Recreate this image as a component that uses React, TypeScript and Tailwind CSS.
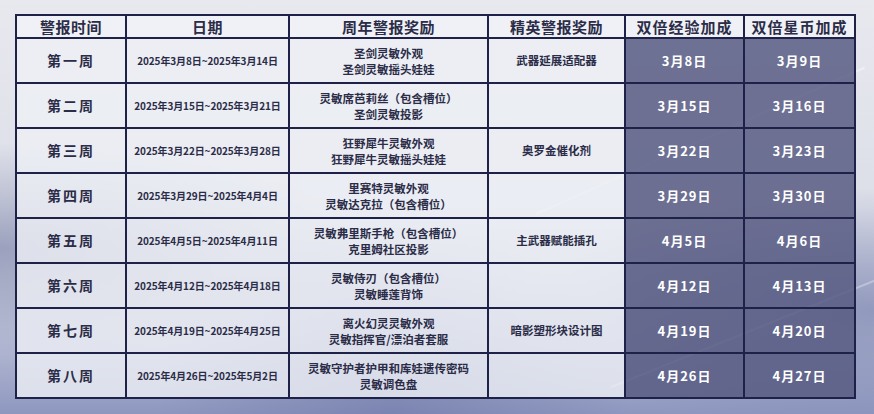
import React from "react";

const rows = [
  { w: "第一周", d: "2025年3月8日~2025年3月14日", a: ["圣剑灵敏外观", "圣剑灵敏摇头娃娃"], e: "武器延展适配器", x: "3月8日", s: "3月9日" },
  { w: "第二周", d: "2025年3月15日~2025年3月21日", a: ["灵敏席芭莉丝（包含槽位）", "圣剑灵敏投影"], e: "", x: "3月15日", s: "3月16日" },
  { w: "第三周", d: "2025年3月22日~2025年3月28日", a: ["狂野犀牛灵敏外观", "狂野犀牛灵敏摇头娃娃"], e: "奥罗金催化剂", x: "3月22日", s: "3月23日" },
  { w: "第四周", d: "2025年3月29日~2025年4月4日", a: ["里赛特灵敏外观", "灵敏达克拉（包含槽位）"], e: "", x: "3月29日", s: "3月30日" },
  { w: "第五周", d: "2025年4月5日~2025年4月11日", a: ["灵敏弗里斯手枪（包含槽位）", "克里姆社区投影"], e: "主武器赋能插孔", x: "4月5日", s: "4月6日" },
  { w: "第六周", d: "2025年4月12日~2025年4月18日", a: ["灵敏侍刃（包含槽位）", "灵敏睡莲背饰"], e: "", x: "4月12日", s: "4月13日" },
  { w: "第七周", d: "2025年4月19日~2025年4月25日", a: ["离火幻灵灵敏外观", "灵敏指挥官/漂泊者套服"], e: "暗影塑形块设计图", x: "4月19日", s: "4月20日" },
  { w: "第八周", d: "2025年4月26日~2025年5月2日", a: ["灵敏守护者护甲和库娃遗传密码", "灵敏调色盘"], e: "", x: "4月26日", s: "4月27日" },
];

const font = { fontFamily: '"Noto Sans CJK SC", "Noto Sans", sans-serif' };

export default function App() {
  return (
    <div
      className="relative w-[874px] h-[414px] overflow-hidden pt-[14px] pl-[15px] bg-[linear-gradient(180deg,#e8e9ef_0%,#dcdee8_50%,#b9bed6_80%,#8e97bf_100%)]"
      style={font}
    >
      <div className="absolute inset-0 bg-[radial-gradient(ellipse_at_0%_60%,rgba(120,128,165,0.6)_0%,rgba(120,128,165,0)_30%)]" />
      <div className="absolute inset-0 bg-[radial-gradient(ellipse_at_100%_75%,rgba(115,125,170,0.6)_0%,rgba(115,125,170,0)_28%)]" />
      <div className="absolute inset-0 bg-[radial-gradient(ellipse_at_45%_100%,rgba(100,110,160,0.45)_0%,rgba(100,110,160,0)_35%)]" />
      <div className="absolute left-[520px] top-[140px] w-[360px] h-[2px] bg-white/40 -rotate-[24deg]" />
      <div className="absolute left-[600px] top-[330px] w-[300px] h-[2px] bg-white/30 -rotate-[22deg]" />
      <table className="relative table-fixed border-collapse w-[839px] text-[#2b2c47] font-bold">
        <colgroup>
          <col className="w-[110px]" />
          <col className="w-[163px]" />
          <col className="w-[199px]" />
          <col className="w-[137px]" />
          <col className="w-[119px]" />
          <col className="w-[111px]" />
        </colgroup>
        <thead>
          <tr className="h-[23px]">
            {["警报时间", "日期", "周年警报奖励", "精英警报奖励", "双倍经验加成", "双倍星币加成"].map((h, i) => (
              <th
                key={h}
                className={`border-2 border-[#1e2148] bg-[#f0f1f6]/95 text-[15px] leading-[19px] font-bold p-0 ${i >= 4 ? "tracking-[1px]" : "tracking-[0.5px]"}`}
              >
                {h}
              </th>
            ))}
          </tr>
        </thead>
        <tbody>
          {rows.map((r) => (
            <tr key={r.w} className="h-[45px]">
              <td className="border-2 border-[#1e2148] bg-[#eef0f5]/80 text-center text-[14px] tracking-[2px] p-0">{r.w}</td>
              <td className="border-2 border-[#1e2148] bg-[#eef0f5]/80 text-center text-[10px] tracking-[-0.1px] p-0">{r.d}</td>
              <td className="border-2 border-[#1e2148] bg-[#eef0f5]/80 text-center text-[11.5px] leading-[16px] p-0">
                <div>{r.a[0]}</div>
                <div>{r.a[1]}</div>
              </td>
              <td className="border-2 border-[#1e2148] bg-[#eef0f5]/80 text-center text-[11.5px] p-0">{r.e}</td>
              <td className="border-2 border-[#1e2148] bg-[#585c82]/85 text-center text-[13px] text-white tracking-[1px] p-0">{r.x}</td>
              <td className="border-2 border-[#1e2148] bg-[#585c82]/85 text-center text-[13px] text-white tracking-[1px] p-0">{r.s}</td>
            </tr>
          ))}
        </tbody>
      </table>
    </div>
  );
}
